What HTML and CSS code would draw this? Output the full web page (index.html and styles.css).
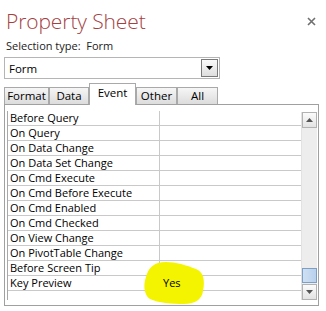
FILE: index.html
```html
<!DOCTYPE html>
<html lang="en">
<head>
  <meta charset="UTF-8" />
  <title>Property Sheet</title>
  <link rel="stylesheet" href="styles.css">
</head>
<body>

  <div class="sheet">
    <div class="sheet-header">
      <h1>Property Sheet</h1>
      <span class="close-btn">
        <svg width="9" height="9" viewBox="0 0 9 9"><path d="M1 1L8 8M8 1L1 8" stroke="#6f6f6f" stroke-width="1.6"/></svg>
      </span>
    </div>
    <div class="selection">Selection type:&nbsp; Form</div>

    <div class="combo">
      <span class="combo-text">Form</span>
      <span class="combo-btn">
        <svg width="7" height="4" viewBox="0 0 7 4"><path d="M0 0H7L3.5 4Z" fill="#000"/></svg>
      </span>
    </div>

    <div class="tabs">
      <div class="tab">Format</div>
      <div class="tab">Data</div>
      <div class="tab active">Event</div>
      <div class="tab">Other</div>
      <div class="tab">All</div>
    </div>

    <div class="panel">
      <div class="grid">
        <div class="rows">
          <div class="row"><span class="name">Before Query</span><span class="value"></span></div>
          <div class="row"><span class="name">On Query</span><span class="value"></span></div>
          <div class="row"><span class="name">On Data Change</span><span class="value"></span></div>
          <div class="row"><span class="name">On Data Set Change</span><span class="value"></span></div>
          <div class="row"><span class="name">On Cmd Execute</span><span class="value"></span></div>
          <div class="row"><span class="name">On Cmd Before Execute</span><span class="value"></span></div>
          <div class="row"><span class="name">On Cmd Enabled</span><span class="value"></span></div>
          <div class="row"><span class="name">On Cmd Checked</span><span class="value"></span></div>
          <div class="row"><span class="name">On View Change</span><span class="value"></span></div>
          <div class="row"><span class="name">On PivotTable Change</span><span class="value"></span></div>
          <div class="row"><span class="name">Before Screen Tip</span><span class="value"></span></div>
          <div class="row"><span class="name">Key Preview</span><span class="value">Yes</span></div>
        </div>

        <div class="scrollbar">
          <div class="sb-btn">
            <svg width="7" height="4" viewBox="0 0 7 4"><path d="M0 4H7L3.5 0Z" fill="#555"/></svg>
          </div>
          <div class="sb-track"></div>
          <div class="sb-thumb"></div>
          <div class="sb-btn">
            <svg width="7" height="4" viewBox="0 0 7 4"><path d="M0 0H7L3.5 4Z" fill="#555"/></svg>
          </div>
        </div>
      </div>

      <!-- highlighter mark drawn over the grid -->
      <svg class="marker" width="62" height="44" viewBox="0 0 62 44">
        <path d="M14 2C24 -1 40 3 52 8C60 11 61 20 59 30C58 39 50 43 40 43C28 43 14 42 6 38C0 34 -1 24 2 16C4 8 8 4 14 2Z" fill="#f4f400"/>
      </svg>
    </div>
  </div>

</body>
</html>
```

FILE: styles.css
```css
* {
  box-sizing: border-box;
  margin: 0;
  padding: 0;
}

body {
  font-family: 'Open Sans', 'Noto Sans', sans-serif;
  font-size: 11px;
  color: #000;
  background-color: #fff;
}

.sheet {
  width: 326px;
  height: 311px;
  padding: 4px 7px 0 4px;
}

.sheet-header {
  display: flex;
  justify-content: space-between;
  height: 34px;
}

.sheet-header h1 {
  font-size: 21px;
  font-weight: 300;
  color: #a3413f;
  padding-left: 2px;
  padding-top: 2px;
  line-height: 30px;
  letter-spacing: -0.1px;
}

.close-btn {
  padding-top: 10px;
  padding-right: 3px;
}

.selection {
  padding-left: 2px;
  font-size: 11px;
  color: #222;
  height: 19px;
}

.combo {
  display: flex;
  align-items: center;
  justify-content: space-between;
  width: 216px;
  height: 22px;
  border: 1px solid #b5b5b5;
  padding: 0 1px 0 4px;
}

.combo-text {
  font-size: 11.5px;
}

.combo-btn {
  width: 17px;
  height: 18px;
  border: 1px solid #7a7a7a;
  background: linear-gradient(#fafafa, #dedede);
  display: flex;
  align-items: center;
  justify-content: center;
}

.tabs {
  display: flex;
  align-items: flex-end;
  margin-top: 4px;
  height: 21px;
  position: relative;
  z-index: 1;
}

.tab {
  height: 17px;
  border: 1px solid #a9a9a9;
  border-bottom: none;
  background: linear-gradient(#f6f6f6, #dcdcdc);
  font-size: 11.5px;
  line-height: 16px;
  text-align: center;
  white-space: nowrap;
}

.tab:nth-child(1) { width: 45px; }
.tab:nth-child(2) { width: 40px; }
.tab:nth-child(4) { width: 41px; }
.tab:nth-child(5) { width: 41px; }

.tab.active {
  width: 47px;
  height: 22px;
  background: #fff;
  line-height: 18px;
  margin-bottom: -1px;
}

.panel {
  position: relative;
  width: 315px;
  height: 202px;
  border: 1px solid #a0a0a0;
  padding: 6px 1px 0 2px;
}

.grid {
  display: flex;
}

.rows {
  width: 295px;
  border-left: 1px solid #a8a8a8;
}

.row {
  display: flex;
  height: 15px;
  border-bottom: 1px solid #c9c9c9;
  line-height: 14px;
  font-size: 11px;
}

.name {
  width: 152px;
  padding-left: 2px;
  border-right: 1px solid #c9c9c9;
  white-space: nowrap;
}

.value {
  padding-left: 3px;
  position: relative;
  z-index: 2;
}

.scrollbar {
  width: 16px;
  height: 188px;
  margin-top: 1px;
  background: #ededed;
  display: flex;
  flex-direction: column;
  border-left: 1px solid #e2e2e2;
}

.sb-btn {
  height: 16px;
  border: 1px solid #b2b2b2;
  background: linear-gradient(#fbfbfb, #e3e3e3);
  display: flex;
  align-items: center;
  justify-content: center;
}

.sb-track {
  flex: 1;
}

.sb-thumb {
  height: 15px;
  margin-bottom: 1px;
  border: 1px solid #7e9fc4;
  background: linear-gradient(90deg, #cfe0f3, #b9d1ee);
}

.marker {
  position: absolute;
  left: 139px;
  top: 156px;
  z-index: 1;
}
```
